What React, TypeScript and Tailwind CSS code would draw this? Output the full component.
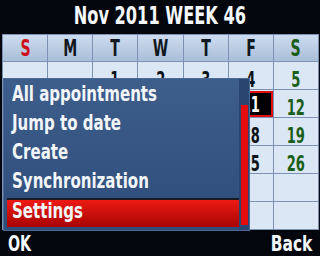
import React from "react";

const days = [
  { d: "S", c: "text-[#d0101a]" },
  { d: "M", c: "text-[#101820]" },
  { d: "T", c: "text-[#101820]" },
  { d: "W", c: "text-[#101820]" },
  { d: "T", c: "text-[#101820]" },
  { d: "F", c: "text-[#101820]" },
  { d: "S", c: "text-[#1a5e1a]" },
];

const weeks: (number | null)[][] = [
  [null, null, 1, 2, 3, 4, 5],
  [6, 7, 8, 9, 10, 11, 12],
  [13, 14, 15, 16, 17, 18, 19],
  [20, 21, 22, 23, 24, 25, 26],
  [27, 28, 29, 30, null, null, null],
  [null, null, null, null, null, null, null],
];

const items = ["All appointments", "Jump to date", "Create", "Synchronization", "Settings"];

export default function App() {
  return (
    <div className="relative w-[320px] h-[256px] overflow-hidden bg-[#03070d] font-['DejaVu_Sans_Condensed','DejaVu_Sans',sans-serif] font-bold">
      {/* Title */}
      <div className="h-[34px] flex items-center justify-center text-[24px] leading-none text-[#f4f8fc] pb-[2px]">
        <span className="inline-block scale-x-[0.75] whitespace-nowrap">Nov 2011 WEEK 46</span>
      </div>

      {/* Calendar grid */}
      <div className="ml-[2px] w-[317px] border-l border-t border-[#7d92b2]">
        <div className="grid grid-cols-7 h-[27px] bg-gradient-to-b from-[#cddcef] to-[#a9bdd8]">
          {days.map((x, i) => (
            <div key={i} className={`flex items-center justify-center border-r border-b border-[#7d92b2] text-[23px] leading-none ${x.c}`}>
              <span className="inline-block scale-x-[0.68]">{x.d}</span>
            </div>
          ))}
        </div>
        {weeks.map((w, r) => (
          <div key={r} className="grid grid-cols-7 h-[28px] bg-[#dbe7f5]">
            {w.map((n, i) => {
              const today = n === 11;
              const color = i === 6 ? "text-[#1a5e1a]" : i === 0 ? "text-[#d0101a]" : "text-[#0c1218]";
              return (
                <div key={i} className="border-r border-b border-[#7d92b2] relative">
                  {today ? (
                    <div className="absolute left-[0px] top-[1px] right-[0px] bottom-[0px] bg-black border-2 border-[#e01010] flex items-end justify-center text-white text-[22px] leading-[18px] pb-[1px]">
                      <span className="inline-block scale-x-[0.66]">{n}</span>
                    </div>
                  ) : (
                    <div className={`h-full flex items-end justify-center text-[22px] leading-[18px] ${color}`}>
                      <span className="inline-block scale-x-[0.66]">{n ?? ""}</span>
                    </div>
                  )}
                </div>
              );
            })}
          </div>
        ))}
      </div>

      {/* Options menu */}
      <div className="absolute left-[3px] top-[78px] w-[247px] h-[153px] bg-gradient-to-b from-[#3d5d8b] to-[#2f4d79] border border-[#4a6a96] flex">
        <div className="w-[235px] pl-[3px] pt-[3px] flex flex-col">
          {items.map((t, i) => (
            <div
              key={t}
              className={`h-[29px] pl-[5px] flex items-center text-[22px] leading-none pb-[6px] text-[#f2f6fa] ${
                i === items.length - 1 ? "bg-gradient-to-b from-[#ee1a14] to-[#a80404] border-t-2 border-[#1a1a22]" : ""
              }`}
            >
              <span className="inline-block origin-left scale-x-[0.76] whitespace-nowrap">{t}</span>
            </div>
          ))}
        </div>
        <div className="flex-1 flex justify-center pt-[26px] pb-[5px] bg-[#2a4670]">
          <div className="w-[7px] h-full bg-[#e40c0c]" />
        </div>
      </div>

      {/* Softkeys */}
      <div className="absolute left-0 right-0 bottom-0 h-[25px] flex items-center justify-between px-[8px] text-[22px] leading-none text-[#f4f8fc]">
        <span className="inline-block origin-left scale-x-[0.72]">OK</span>
        <span className="inline-block origin-right scale-x-[0.78]">Back</span>
      </div>
    </div>
  );
}
